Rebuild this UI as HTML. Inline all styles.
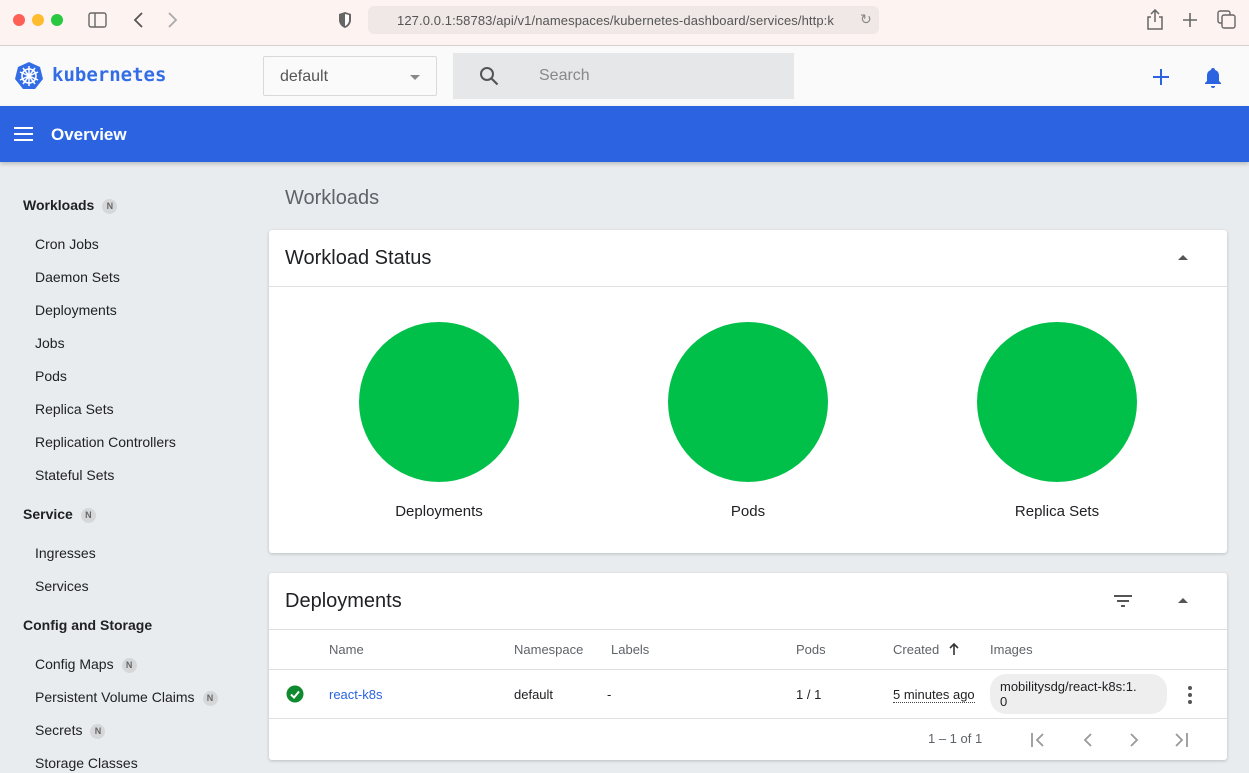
<!DOCTYPE html>
<html><head><meta charset="utf-8"><style>
*{box-sizing:border-box;margin:0;padding:0}
body{width:1249px;height:773px;overflow:hidden;font-family:"Liberation Sans",sans-serif;background:#e9ecee;position:relative;color:#202124}
.abs{position:absolute}
#bb{left:0;top:0;width:1249px;height:46px;background:#fdf3f1;border-bottom:1px solid #d6d0ce}
.dot{width:12px;height:12px;border-radius:50%;top:14px}
#url{left:368px;top:6px;width:511px;height:28px;background:#efe8e6;border-radius:6px;font-size:13px;color:#555;padding:7px 0 0 29px;white-space:nowrap;overflow:hidden;letter-spacing:0.1px}
#hdr{left:0;top:46px;width:1249px;height:60px;background:#fafafa}
#blue{left:0;top:106px;width:1249px;height:56px;background:#2b63e1;box-shadow:0 2px 4px rgba(0,0,0,.2)}
.side{font-size:14px;color:#202124}
.sh{font-weight:bold;left:23px}
.si{left:35px}
.n{display:inline-block;width:15px;height:15px;border-radius:50%;background:#d5d7d9;color:#666;font-size:9px;text-align:center;line-height:15px;font-weight:bold;margin-left:8px;vertical-align:1px}
.card{background:#fff;box-shadow:0 1px 3px rgba(0,0,0,.2);border-radius:3px}
.circ{width:160px;height:160px;border-radius:50%;background:#00c04a;top:322px}
.lab{font-size:15px;top:503px;width:200px;text-align:center}
.th{font-size:13px;color:#5f6368;top:642px}
.td{font-size:13px;top:687px}
</style></head><body>
<div id="bb" class="abs"></div>
<div class="abs dot" style="left:13px;background:#fe5f57"></div>
<div class="abs dot" style="left:32px;background:#febc2e"></div>
<div class="abs dot" style="left:51px;background:#28c840"></div>
<svg class="abs" style="left:88px;top:11px" width="20" height="18"><rect x="1" y="2" width="17" height="14" rx="2" fill="none" stroke="#666" stroke-width="1.4"/><line x1="7" y1="2" x2="7" y2="16" stroke="#666" stroke-width="1.4"/></svg>
<svg class="abs" style="left:132px;top:11px" width="14" height="18"><path d="M10 2L3 9l7 7" fill="none" stroke="#555" stroke-width="1.8"/></svg>
<svg class="abs" style="left:166px;top:11px" width="14" height="18"><path d="M3 2l7 7-7 7" fill="none" stroke="#aaa" stroke-width="1.8"/></svg>
<svg class="abs" style="left:337px;top:11px" width="16" height="18"><path d="M8 1L2 3v6c0 4 3 7 6 8 3-1 6-4 6-8V3z" fill="#666"/><path d="M8 3v12c2-1 4-3 4-6V4z" fill="#fff"/></svg>
<div id="url" class="abs">127.0.0.1:58783/api/v1/namespaces/kubernetes-dashboard/services/http:k</div>
<div class="abs" style="left:855px;top:6px;width:24px;height:28px;background:#efe8e6;border-radius:0 6px 6px 0"></div>
<div class="abs" style="left:860px;top:11px;font-size:14px;color:#888">↻</div>
<svg class="abs" style="left:1146px;top:9px" width="18" height="22"><path d="M5 8H2v12h14V8h-3M9 1v12M5 5l4-4 4 4" fill="none" stroke="#666" stroke-width="1.5"/></svg>
<svg class="abs" style="left:1181px;top:11px" width="18" height="18"><path d="M9 2v14M2 9h14" stroke="#666" stroke-width="1.6"/></svg>
<svg class="abs" style="left:1217px;top:10px" width="20" height="20"><rect x="1" y="1" width="12" height="12" rx="2" fill="none" stroke="#666" stroke-width="1.4"/><rect x="5" y="5" width="13" height="13" rx="2" fill="#fdf3f1" stroke="#666" stroke-width="1.4"/></svg>

<div id="hdr" class="abs"></div>
<svg class="abs" style="left:14px;top:61px" width="30" height="30" viewBox="0 0 30 30"><path d="M15 1l11 5 3 12-8 10H9L1 18 4 6z" fill="#326de6"/><circle cx="15" cy="15" r="7" fill="none" stroke="#fff" stroke-width="1.6"/><g stroke="#fff" stroke-width="1.5"><path d="M15 5v20M6 11l18 8M6 19l18-8M9 7l12 16M21 7L9 23"/></g><circle cx="15" cy="15" r="2" fill="#fff"/></svg>
<div class="abs" style="left:52px;top:64px;font-size:19px;font-weight:bold;color:#326de6;font-family:'DejaVu Sans Mono','Liberation Mono',monospace">kubernetes</div>
<div class="abs" style="left:263px;top:56px;width:174px;height:40px;border:1px solid #d9d9d9;border-radius:2px;background:#fafafa;font-size:16px;color:#555;padding:11px 0 0 16px">default</div>
<div class="abs" style="left:410px;top:75px;width:0;height:0;border-left:5px solid transparent;border-right:5px solid transparent;border-top:5px solid #888"></div>
<div class="abs" style="left:453px;top:53px;width:341px;height:46px;background:#e5e7e9"></div>
<svg class="abs" style="left:479px;top:66px" width="20" height="20"><circle cx="8" cy="8" r="6" fill="none" stroke="#555" stroke-width="2"/><path d="M12.5 12.5l6 6" stroke="#555" stroke-width="2.2"/></svg>
<div class="abs" style="left:539px;top:67px;font-size:16px;color:#888">Search</div>
<svg class="abs" style="left:1152px;top:68px" width="18" height="18"><path d="M9 1v16M1 9h16" stroke="#2b63e1" stroke-width="2"/></svg>
<svg class="abs" style="left:1203px;top:66px" width="20" height="22"><path d="M10 2a2 2 0 012 2c3 1 4 3 4 6v5l2 2v1H2v-1l2-2v-5c0-3 1-5 4-6a2 2 0 012-2z" fill="#2b63e1"/><path d="M8 20h4a2 2 0 01-4 0z" fill="#2b63e1"/></svg>

<div id="blue" class="abs"></div>
<svg class="abs" style="left:14px;top:127px" width="20" height="14"><path d="M0 1h19M0 7h19M0 13h19" stroke="#fff" stroke-width="2"/></svg>
<div class="abs" style="left:51px;top:125px;font-size:17px;font-weight:bold;color:#fff">Overview</div>

<div class="abs side sh" style="top:197px">Workloads<span class="n">N</span></div>
<div class="abs side si" style="top:236px">Cron Jobs</div>
<div class="abs side si" style="top:269px">Daemon Sets</div>
<div class="abs side si" style="top:302px">Deployments</div>
<div class="abs side si" style="top:335px">Jobs</div>
<div class="abs side si" style="top:368px">Pods</div>
<div class="abs side si" style="top:401px">Replica Sets</div>
<div class="abs side si" style="top:434px">Replication Controllers</div>
<div class="abs side si" style="top:467px">Stateful Sets</div>
<div class="abs side sh" style="top:506px">Service<span class="n">N</span></div>
<div class="abs side si" style="top:545px">Ingresses</div>
<div class="abs side si" style="top:578px">Services</div>
<div class="abs side sh" style="top:617px">Config and Storage</div>
<div class="abs side si" style="top:656px">Config Maps<span class="n">N</span></div>
<div class="abs side si" style="top:689px">Persistent Volume Claims<span class="n">N</span></div>
<div class="abs side si" style="top:722px">Secrets<span class="n">N</span></div>
<div class="abs side si" style="top:755px">Storage Classes</div>

<div class="abs" style="left:285px;top:187px;font-size:20px;color:#5f6368">Workloads</div>

<div class="abs card" style="left:269px;top:230px;width:958px;height:323px"></div>
<div class="abs" style="left:285px;top:247px;font-size:20px">Workload Status</div>
<div class="abs" style="left:1178px;top:255px;border-left:5px solid transparent;border-right:5px solid transparent;border-bottom:5px solid #555"></div>
<div class="abs" style="left:269px;top:286px;width:958px;height:1px;background:#e0e0e0"></div>
<div class="abs circ" style="left:359px"></div>
<div class="abs circ" style="left:668px"></div>
<div class="abs circ" style="left:977px"></div>
<div class="abs lab" style="left:339px">Deployments</div>
<div class="abs lab" style="left:648px">Pods</div>
<div class="abs lab" style="left:957px">Replica Sets</div>

<div class="abs card" style="left:269px;top:573px;width:958px;height:187px"></div>
<div class="abs" style="left:285px;top:590px;font-size:20px">Deployments</div>
<svg class="abs" style="left:1114px;top:594px" width="18" height="14"><path d="M0 2h18M3 7h12M7 12h4" stroke="#555" stroke-width="2"/></svg>
<div class="abs" style="left:1178px;top:598px;border-left:5px solid transparent;border-right:5px solid transparent;border-bottom:5px solid #555"></div>
<div class="abs" style="left:269px;top:629px;width:958px;height:1px;background:#e0e0e0"></div>
<div class="abs th" style="left:329px">Name</div>
<div class="abs th" style="left:514px">Namespace</div>
<div class="abs th" style="left:611px">Labels</div>
<div class="abs th" style="left:796px">Pods</div>
<div class="abs th" style="left:893px">Created</div>
<svg class="abs" style="left:948px;top:642px" width="12" height="14"><path d="M6 13V2M2 6l4-4 4 4" fill="none" stroke="#333" stroke-width="1.6"/></svg>
<div class="abs th" style="left:990px">Images</div>
<div class="abs" style="left:269px;top:669px;width:958px;height:1px;background:#e0e0e0"></div>
<svg class="abs" style="left:286px;top:685px" width="18" height="18"><circle cx="9" cy="9" r="8.5" fill="#0f8a2e"/><path d="M5 9.5l3 3 5-6" fill="none" stroke="#fff" stroke-width="2"/></svg>
<div class="abs td" style="left:329px;color:#2b63e1">react-k8s</div>
<div class="abs td" style="left:514px">default</div>
<div class="abs td" style="left:607px">-</div>
<div class="abs td" style="left:796px">1 / 1</div>
<div class="abs td" style="left:893px;border-bottom:1px dotted #444">5 minutes ago</div>
<div class="abs" style="left:990px;top:674px;width:177px;height:40px;background:#eeeeee;border-radius:16px;font-size:13px;padding:5px 0 0 10px;line-height:15px">mobilitysdg/react-k8s:1.<br>0</div>
<svg class="abs" style="left:1186px;top:685px" width="8" height="20"><circle cx="4" cy="3" r="2" fill="#555"/><circle cx="4" cy="10" r="2" fill="#555"/><circle cx="4" cy="17" r="2" fill="#555"/></svg>
<div class="abs" style="left:269px;top:718px;width:958px;height:1px;background:#e0e0e0"></div>
<div class="abs" style="left:928px;top:731px;font-size:13px;color:#5f6368">1 – 1 of 1</div>
<svg class="abs" style="left:1030px;top:731px" width="170" height="18"><g fill="none" stroke="#999" stroke-width="1.8"><path d="M2 2v14M13 3l-6 6 6 6"/><path d="M61 3l-6 6 6 6"/><path d="M101 3l6 6-6 6"/><path d="M146 3l6 6-6 6M157 2v14"/></g></svg>
</body></html>
